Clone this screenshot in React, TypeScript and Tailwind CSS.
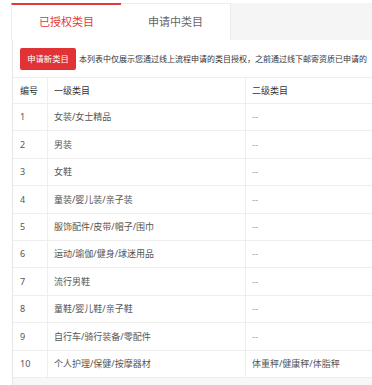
import React from "react";

const rows: [string, string, string][] = [
  ["1", "女装/女士精品", "--"],
  ["2", "男装", "--"],
  ["3", "女鞋", "--"],
  ["4", "童装/婴儿装/亲子装", "--"],
  ["5", "服饰配件/皮带/帽子/围巾", "--"],
  ["6", "运动/瑜伽/健身/球迷用品", "--"],
  ["7", "流行男鞋", "--"],
  ["8", "童鞋/婴儿鞋/亲子鞋", "--"],
  ["9", "自行车/骑行装备/零配件", "--"],
  ["10", "个人护理/保健/按摩器材", "体重秤/健康秤/体脂秤"],
];

export default function App() {
  return (
    <div
      className="w-[372px] h-[385px] bg-white overflow-hidden"
      style={{ fontFamily: '"Noto Sans", "Noto Sans CJK SC", sans-serif' }}
    >
      <div className="ml-[11px] flex flex-col h-full">
        <div className="mt-[3px] h-[37px] bg-[#f5f5f5] flex shrink-0">
          <div className="w-[110px] bg-white border-t-2 border-[#e4393c] border-l border-l-[#ececec] flex items-center justify-center text-[11px] text-[#e4393c]">
            已授权类目
          </div>
          <div className="w-[110px] bg-white border-t border-r border-[#ececec] flex items-center justify-center text-[11px] text-[#666]">
            申请中类目
          </div>
        </div>
        <div className="flex-1 ml-px border-l border-[#e6e6e6] bg-[#f7f7f7] flex flex-col">
          <div className="bg-white h-[37px] flex items-start pt-[8px] pl-[7px] shrink-0 overflow-hidden">
            <div className="w-[56px] h-[22px] bg-[#e13335] rounded-[2px] text-white text-[8.3px] flex items-center justify-center shrink-0">
              申请新类目
            </div>
            <div className="ml-[3px] h-[22px] flex items-center text-[8px] text-[#333] whitespace-nowrap">
              本列表中仅展示您通过线上流程申请的类目授权，之前通过线下邮寄资质已申请的
            </div>
          </div>
          <div className="bg-white border-t border-[#eeeeee] text-[9px]">
            <div className="flex h-[26px] border-b border-[#eeeeee] text-[#333]">
              <div className="w-[35px] border-r border-[#eeeeee] flex items-center pl-[7px]">编号</div>
              <div className="w-[198px] border-r border-[#eeeeee] flex items-center pl-[6px]">一级类目</div>
              <div className="flex-1 flex items-center pl-[6px]">二级类目</div>
            </div>
            {rows.map(([n, a, b]) => (
              <div key={n} className="flex h-[27.4px] border-b border-[#eeeeee] text-[#555]">
                <div className="w-[35px] border-r border-[#eeeeee] flex items-center pl-[7px]">{n}</div>
                <div className="w-[198px] border-r border-[#eeeeee] flex items-center pl-[6px]">{a}</div>
                <div className={"flex-1 flex items-center pl-[6px] " + (b === "--" ? "text-[#999]" : "text-[#555]")}>{b}</div>
              </div>
            ))}
          </div>
        </div>
      </div>
    </div>
  );
}
